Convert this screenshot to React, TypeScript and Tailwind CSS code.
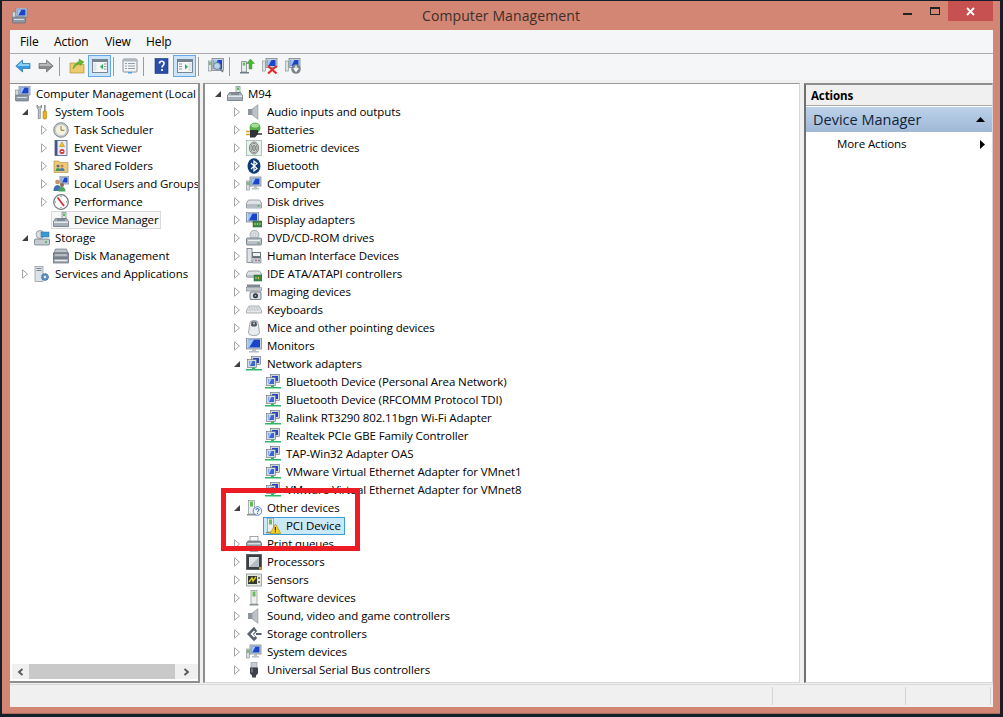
import React from "react";

type P = { children: React.ReactNode; s?: number };
const S = ({ children, s = 16 }: P) => (
  <svg width={s} height={s} viewBox="0 0 16 16" className="shrink-0">{children}</svg>
);

const Mon = ({ x = 3, y = 0, w = 12, h = 9 }: { x?: number; y?: number; w?: number; h?: number }) => (
  <g>
    <rect x={x} y={y} width={w} height={h} fill="#c9d0d8" stroke="#6f7b88" strokeWidth="0.7" />
    <rect x={x + 1.5} y={y + 1.5} width={w - 3} height={h - 3} fill="#1b45c9" />
    <path d={`M${x + 1.5} ${y + 1.5}h${(w - 3) * 0.5}l-${(w - 3) * 0.4} ${h - 3}h-${(w - 3) * 0.1}z`} fill="#9fc4f2" />
  </g>
);

const IComputer = () => (
  <S>
    <rect x="0.5" y="5" width="3" height="9" fill="#d9dde0" stroke="#7e8a90" strokeWidth="0.6" />
    <rect x="1.2" y="6" width="1.5" height="3" fill="#5bb35b" />
    <Mon x={4} y={1} w={11} h={9} />
    <path d="M8 10h3v2h2v1.500H6V12h2z" fill="#b8c0c8" />
  </S>
);
const ICompMgmt = () => (
  <S>
    <Mon x={4} y={0} w={11} h={9} />
    <rect x="0.500" y="9" width="13" height="6" rx="0.800" fill="#8d99a5" stroke="#59636e" strokeWidth="0.600" />
    <rect x="2" y="11" width="10" height="1" fill="#d9dee3" />
    <rect x="0.500" y="4" width="3" height="5" fill="#d5dadd" stroke="#7e8a90" strokeWidth="0.600" />
  </S>
);
const IDevMgr = () => (
  <S>
    <rect x="9" y="0.500" width="4" height="6" fill="#e3e8e3" stroke="#7d8a8d" strokeWidth="0.700" />
    <rect x="10" y="1.500" width="2" height="2.500" fill="#5cb85c" />
    <path d="M2.500 6.500h11l2 3v5H.5v-5z" fill="#a5afb9" stroke="#5d6874" strokeWidth="0.700" />
    <rect x="1" y="9.500" width="14" height="1.500" fill="#e4e8eb" />
    <rect x="4" y="7.500" width="8" height="1" fill="#5d6874" />
  </S>
);
const ITools = () => (
  <S>
    <path d="M3 1v3l1.300 1v9.500h2V5l1.200-1V1L6.500 3h-2z" fill="#c6ccd2" stroke="#5b636b" strokeWidth="0.600" />
    <rect x="10" y="1" width="1.600" height="6" fill="#8a9199" />
    <rect x="9" y="7" width="3.600" height="8" rx="1" fill="#eeb312" stroke="#9a7207" strokeWidth="0.500" />
  </S>
);
const IClock = () => (
  <S>
    <circle cx="8" cy="8" r="7.300" fill="#c3c9cf" stroke="#6c747c" strokeWidth="0.800" />
    <circle cx="8" cy="8" r="5.200" fill="#f6f1dd" />
    <path d="M8 4v4.300h3.500" fill="none" stroke="#8b7c2f" strokeWidth="1" />
  </S>
);
const IEvent = () => (
  <S>
    <rect x="2" y="0.500" width="12" height="15" fill="#e8ecf7" stroke="#3a4a7a" strokeWidth="0.700" />
    <rect x="2" y="0.500" width="2.500" height="15" fill="#44558f" />
    <path d="M9 2l2.500 4.500h-5z" fill="#f5c518" stroke="#8a6d00" strokeWidth="0.400" />
    <circle cx="9" cy="11.500" r="2.500" fill="#d8393a" />
    <rect x="7.800" y="11" width="2.400" height="1" fill="#fff" />
  </S>
);
const IShared = () => (
  <S>
    <path d="M1 3h5l1 1.500h8v10H1z" fill="#eec978" stroke="#a98a3f" strokeWidth="0.600" />
    <circle cx="5" cy="8" r="1.500" fill="#556b8e" />
    <path d="M2.500 13c0-2 1-3 2.500-3s2.500 1 2.500 3z" fill="#3f9c58" />
    <circle cx="9" cy="8" r="1.500" fill="#b98455" />
    <path d="M6.500 13c0-2 1-3 2.500-3s2.500 1 2.500 3z" fill="#4b77b8" />
  </S>
);
const IUsers = () => (
  <S>
    <Mon x={7} y={0} w={9} h={8} />
    <circle cx="4.500" cy="6" r="2.300" fill="#c69364" />
    <path d="M.5 15c0-4 1.500-6 4-6s4 2 4 6z" fill="#3d72b5" />
    <circle cx="9" cy="9" r="2" fill="#8a6c4f" />
    <path d="M5.500 15.500c0-3 1.300-4.500 3.500-4.500s3.500 1.500 3.500 4.500z" fill="#4da35c" />
  </S>
);
const IPerf = () => (
  <S>
    <circle cx="8" cy="8" r="7.300" fill="#fdfdfd" stroke="#6f767d" strokeWidth="1.200" />
    <path d="M4.500 3.500L11 12" stroke="#d8262c" strokeWidth="1.600" />
    <path d="M8 2v1M2 8h1M13 8h1M8 13v1" stroke="#444" strokeWidth="0.800" />
  </S>
);
const IStorage = () => (
  <S>
    <circle cx="6" cy="4.500" r="4" fill="#d8dde2" stroke="#6d7680" strokeWidth="0.600" />
    <rect x="7" y="2" width="8" height="5" fill="#3b9ad6" stroke="#2a6b96" strokeWidth="0.500" />
    <rect x="0.500" y="9" width="15" height="6" rx="1" fill="#c3cad0" stroke="#66707a" strokeWidth="0.700" />
    <rect x="11" y="11" width="2" height="2" fill="#67b567" />
  </S>
);
const IDiskMgmt = () => (
  <S>
    <path d="M2.500 1h11l1.500 4H1z" fill="#bcc3ca" stroke="#5d6570" strokeWidth="0.600" />
    <rect x="0.500" y="5" width="15" height="5" fill="#8a939c" stroke="#4e565f" strokeWidth="0.600" />
    <rect x="2" y="6.500" width="12" height="1" fill="#e3e6e9" />
    <rect x="0.500" y="10.500" width="15" height="4.500" fill="#a6adb4" stroke="#4e565f" strokeWidth="0.600" />
    <rect x="2" y="12" width="12" height="1" fill="#eceef0" />
  </S>
);
const IServices = () => (
  <S>
    <rect x="1" y="0.500" width="8" height="15" fill="#dde2e7" stroke="#7b858f" strokeWidth="0.600" />
    <rect x="2.500" y="2" width="5" height="1" fill="#7b858f" />
    <rect x="2.500" y="4" width="5" height="1" fill="#7b858f" />
    <circle cx="11" cy="11" r="3.500" fill="#5c8fc4" stroke="#3a5d85" strokeWidth="0.800" strokeDasharray="1.500 0.800" />
    <circle cx="11" cy="11" r="1.200" fill="#eaf1f8" />
  </S>
);
const ISpeaker = () => (
  <S>
    <rect x="2" y="5" width="4" height="6" fill="#8f959b" />
    <path d="M6 5l6-4.500v15L6 11z" fill="#bcc1c5" stroke="#8d9399" strokeWidth="0.500" />
  </S>
);
const IBattery = () => (
  <S>
    <circle cx="9" cy="6" r="5.500" fill="#55b04a" />
    <ellipse cx="9" cy="3.500" rx="3.800" ry="2" fill="#a6dd9a" />
    <path d="M4 8h8v4l-3 3.500H4z" fill="#2f3336" />
    <path d="M0 9.500h4M0 12.500h4" stroke="#c9a227" strokeWidth="1.300" />
    <path d="M11 12h5" stroke="#2f3336" strokeWidth="1.500" />
  </S>
);
const IBio = () => (
  <S>
    <rect x="0.500" y="0.500" width="15" height="15" fill="#e9f1ec" stroke="#9db8ab" strokeWidth="0.800" />
    <g fill="none" stroke="#4a4a4a" strokeWidth="0.700">
      <ellipse cx="8" cy="8" rx="4.500" ry="6" />
      <ellipse cx="8" cy="8" rx="3" ry="4.500" />
      <ellipse cx="8" cy="8" rx="1.500" ry="3" />
      <path d="M8 6v4" />
    </g>
  </S>
);
const IBluetooth = () => (
  <S>
    <ellipse cx="8" cy="8" rx="6.500" ry="7.800" fill="#0d3a78" />
    <path d="M5 5l6 5.500L8 13V3l3 2.500L5 11" fill="none" stroke="#fff" strokeWidth="1.200" />
  </S>
);
const IDisk = () => (
  <S>
    <path d="M2.500 6h11l2 3v5H.5V9z" fill="#dfe3e6" stroke="#79838c" strokeWidth="0.700" />
    <rect x="1" y="10" width="14" height="3.500" fill="#b5bcc3" />
    <rect x="11.500" y="11" width="2" height="1.500" fill="#55b055" />
  </S>
);
const IDisplay = () => (
  <S>
    <Mon x={0.500} y={0} w={12} h={10} />
    <rect x="7" y="9" width="9" height="6" fill="#3d8a4e" stroke="#24592f" strokeWidth="0.500" />
    <path d="M8.500 11h1v2h-1zM11 11h1v2h-1zM13.500 11h1v2h-1z" fill="#e5c34a" />
  </S>
);
const IDvd = () => (
  <S>
    <circle cx="8.500" cy="4.800" r="4.500" fill="#d5dbe0" stroke="#7e8790" strokeWidth="0.600" />
    <circle cx="8.500" cy="4.800" r="1.300" fill="#fff" stroke="#7e8790" strokeWidth="0.400" />
    <rect x="0.500" y="8" width="15" height="7" rx="1" fill="#b9c0c7" stroke="#59626b" strokeWidth="0.700" />
    <rect x="2" y="10" width="12" height="1" fill="#eef0f2" />
    <rect x="11.500" y="12.300" width="2" height="1.500" fill="#55b055" />
  </S>
);
const IHid = () => (
  <S>
    <rect x="1" y="0.500" width="5" height="14" fill="#dfe3e8" stroke="#5e6871" strokeWidth="0.700" />
    <path d="M6 4h9v6H6z" fill="#6c7680" />
    <rect x="7" y="5" width="7" height="3" fill="#eef0f2" />
    <path d="M8 10h7v5H6z" fill="#cfd5db" stroke="#5e6871" strokeWidth="0.500" />
    <circle cx="10" cy="12.500" r="1" fill="#c55" />
    <circle cx="13" cy="12.500" r="1" fill="#48a" />
  </S>
);
const IIde = () => (
  <S>
    <path d="M2.500 5h11l2 3v3H.5V8z" fill="#dfe3e6" stroke="#79838c" strokeWidth="0.700" />
    <rect x="1" y="9" width="8" height="3" fill="#b5bcc3" />
    <rect x="8" y="9" width="8" height="6" fill="#3d8a4e" stroke="#24592f" strokeWidth="0.500" />
    <path d="M9.500 11h1v2h-1zM12 11h1v2h-1z" fill="#e5c34a" />
  </S>
);
const IImaging = () => (
  <S>
    <path d="M1 0.500h13v2.500H1z" fill="#808890" />
    <rect x="0.500" y="3.500" width="15" height="3.500" fill="#c2c8ce" stroke="#6a727b" strokeWidth="0.500" />
    <rect x="4" y="8" width="11" height="7.500" rx="1" fill="#dcdfe3" stroke="#4d545b" strokeWidth="0.700" />
    <circle cx="9.500" cy="11.700" r="2.500" fill="#2a3138" />
    <circle cx="9.500" cy="11.700" r="1" fill="#8fb3d6" />
  </S>
);
const IKeyboard = () => (
  <S>
    <path d="M3 4h10l2.500 4.500V11H.5V8.500z" fill="#e6e8ea" stroke="#8b9097" strokeWidth="0.700" />
    <path d="M3 6h10M2.500 8h11" stroke="#9ba1a7" strokeWidth="0.900" strokeDasharray="1 0.700" />
  </S>
);
const IMouse = () => (
  <S>
    <path d="M4 2.500C4 1 6 .5 8 .5s4 .5 4 2l1.500 10c0 2-2.500 3-5.500 3s-5.500-1-5.500-3z" fill="#e9ecee" stroke="#6d747b" strokeWidth="0.600" />
    <path d="M5.500 1.500h5l.5 4-1.500 1h-3.500l-1-1z" fill="#4e565e" />
    <circle cx="8" cy="3.500" r="1" fill="#c5ccd2" />
  </S>
);
const IMonitor = () => (
  <S>
    <Mon x={0.500} y={0} w={15} h={11} />
    <path d="M6 11h4v2h3v1.500H3V13h3z" fill="#b6bdc4" />
  </S>
);
const INet = () => (
  <S>
    <rect x="5.500" y="0.500" width="9" height="8" fill="#cfd5db" stroke="#5f6973" strokeWidth="0.600" />
    <rect x="7" y="2" width="6" height="5" fill="#2647c8" />
    <rect x="1.500" y="3.500" width="9" height="8" fill="#d6dbe0" stroke="#5f6973" strokeWidth="0.600" />
    <rect x="3" y="5" width="6" height="5" fill="#3d63da" />
    <path d="M3.500 5h3L4 10H3z" fill="#a9c9f2" />
    <path d="M6 11.500h3V13h7v1.500H0V13h6z" fill="#2fb765" />
  </S>
);
const Tall = () => (
  <g>
    <rect x="2.500" y="0.500" width="6" height="13.500" fill="#eef0ee" stroke="#8a9298" strokeWidth="0.700" />
    <rect x="4" y="1.500" width="3" height="5" fill="#67bb5e" />
    <rect x="1" y="14" width="9" height="1.500" fill="#8a9298" />
  </g>
);
const IOther = () => (
  <S>
    <Tall />
    <circle cx="11.500" cy="11" r="4.300" fill="#eef3fb" stroke="#3a6bb8" strokeWidth="0.800" />
    <path d="M10 10c0-2 3-2 3 0 0 1-1.500 1-1.500 2.200M11.500 13v.8" fill="none" stroke="#1e4a9a" strokeWidth="1" />
  </S>
);
const IPci = () => (
  <S>
    <Tall />
    <path d="M10.500 6L15.800 15.500H5z" fill="#f8d11d" stroke="#a3830e" strokeWidth="0.600" />
    <path d="M10.400 9v3.500M10.400 13.300v1" stroke="#222" strokeWidth="1.200" />
  </S>
);
const IPrint = () => (
  <S>
    <rect x="4" y="0.500" width="8" height="5" fill="#fbfbfb" stroke="#6b737b" strokeWidth="0.600" />
    <path d="M2 5h12l1.500 2v5H.5V7z" fill="#8f989f" stroke="#4f575e" strokeWidth="0.600" />
    <rect x="1.500" y="7" width="13" height="1.500" fill="#d9dde0" />
    <rect x="4" y="11" width="8" height="4.500" fill="#fbfbfb" stroke="#6b737b" strokeWidth="0.600" />
  </S>
);
const IProc = () => (
  <S>
    <rect x="0.500" y="0.500" width="15" height="15" fill="#3a3f44" stroke="#22262a" strokeWidth="0.500" />
    <rect x="3" y="3" width="10" height="10" fill="#b7bdc2" />
    <path d="M3 3h10L3 13z" fill="#e2e5e7" />
    <rect x="13" y="13" width="2.500" height="2.500" fill="#d9952a" />
  </S>
);
const ISensor = () => (
  <S>
    <rect x="0.500" y="2" width="15" height="12" fill="#e4e9e4" stroke="#7d8a83" strokeWidth="0.700" />
    <rect x="2" y="4" width="9" height="8" fill="#32382f" />
    <path d="M3 10l3-4 1 3 3-4" fill="none" stroke="#e6d42a" strokeWidth="1.300" />
    <rect x="12" y="5" width="2" height="2" fill="#777" />
    <rect x="12" y="9" width="2" height="2" fill="#777" />
  </S>
);
const ISoftware = () => (
  <S>
    <g transform="translate(2.500 0)"><Tall /></g>
  </S>
);
const IStorCtl = () => (
  <S>
    <path d="M8 .8L1 8l7 7.200 3.200-3.200L8 8.500 11.200 5z" fill="#5a636b" />
    <path d="M8 4.500L4.500 8 8 11.500l1.200-1.200L6.800 8 9.200 5.700z" fill="#fff" />
    <path d="M10 8h5.500" stroke="#5a636b" strokeWidth="2" />
  </S>
);
const IUsb = () => (
  <S>
    <rect x="5" y="0.500" width="6" height="5" fill="#c7cdd2" stroke="#7a828a" strokeWidth="0.500" />
    <path d="M4 5.500h8v6l-2 2v2H6v-2l-2-2z" fill="#3c4248" />
    <rect x="5" y="6.500" width="2" height="4" fill="#6d757c" />
  </S>
);

/* toolbar icons */
const ArrowL = () => (
  <S>
    <path d="M7.500 2L.8 8l6.700 6v-3.500H15v-5H7.500z" fill="#3a9ae0" stroke="#2674b4" strokeWidth="0.700" />
    <path d="M2 8l5-4.500v2.500h7.300v2z" fill="#8ed0f7" />
  </S>
);
const ArrowR = () => (
  <S>
    <path d="M8.500 2l6.700 6-6.700 6v-3.500H1v-5h7.500z" fill="#8a8a8a" stroke="#6a6a6a" strokeWidth="0.700" />
    <path d="M14 8L9 3.500V6H1.700v2z" fill="#b9b9b9" />
  </S>
);
const TUp = () => (
  <S>
    <path d="M1 5h5l1 1.500h8V15H1z" fill="#eccb6f" stroke="#b1923f" strokeWidth="0.700" />
    <path d="M4 11C5 6 8 4 10 3.500V1l5 3-4 3.500V5.500c-2 .5-5 2.500-7 5.500z" fill="#6ab82d" stroke="#4b8c1c" strokeWidth="0.400" />
  </S>
);
const TPane = ({ right }: { right?: boolean }) => (
  <S>
    <rect x="0.500" y="1.500" width="15" height="13" fill="#f5f7f9" stroke="#5f6b77" strokeWidth="0.800" />
    <rect x="0.500" y="1.500" width="15" height="2.500" fill="#788390" />
    {right ? (
      <g>
        <path d="M2 6h3M2 8.500h3M2 11h3" stroke="#8b96a2" />
        <path d="M8 6l3 2.800-3 2.800z" fill="#2eb356" />
        <rect x="11.500" y="5" width="3" height="8" fill="#dfe5ea" />
      </g>
    ) : (
      <g>
        <rect x="1.500" y="5" width="3" height="8" fill="#dfe5ea" />
        <path d="M11 6l-3 2.800 3 2.800z" fill="#2eb356" />
        <path d="M12 6h2.500M12 8.500h2.500M12 11h2.500" stroke="#8b96a2" />
      </g>
    )}
  </S>
);
const TProps = () => (
  <S>
    <rect x="1" y="1" width="14" height="13" rx="1" fill="#f2f4f6" stroke="#7d8790" strokeWidth="0.900" />
    <rect x="1" y="1" width="14" height="2.500" fill="#b0b7be" />
    <path d="M3 5.500h2M6 5.500h7M3 8h2M6 8h7M3 10.500h2M6 10.500h7" stroke="#8b96a2" strokeWidth="0.900" />
    <rect x="6" y="14" width="4" height="1.500" fill="#4da3e0" />
  </S>
);
const THelp = () => (
  <S>
    <rect x="1" y="0.500" width="13" height="15" fill="#2a4ea8" stroke="#1d357a" strokeWidth="0.600" />
    <path d="M5.500 5.500c0-3 4.500-3 4.500 0 0 2-2 2-2 4M8 11v2" fill="none" stroke="#fff" strokeWidth="1.700" />
  </S>
);
const TScan = () => (
  <S>
    <rect x="0.500" y="3" width="3" height="10" fill="#dfe3e3" stroke="#7e8a90" strokeWidth="0.600" />
    <rect x="1.200" y="4" width="1.500" height="3" fill="#5bb35b" />
    <Mon x={4} y={0.500} w={11.500} h={12} />
    <circle cx="9" cy="8" r="3.500" fill="#b8d3ea" stroke="#6b7f90" strokeWidth="1" />
    <path d="M11.500 10.500l3.500 3.500" stroke="#6b7f90" strokeWidth="1.600" />
  </S>
);
const TUpdate = () => (
  <S>
    <path d="M1 14h9v1.500H1z" fill="#70808a" />
    <path d="M2.500 3.500h5v10.500h-5z" fill="#eceeee" stroke="#6c757d" strokeWidth="0.700" />
    <rect x="3.800" y="4.500" width="2.500" height="3" fill="#67bb5e" />
    <path d="M11.500 1l4 4.500H13V11h-3V5.500H7.500z" fill="#4cb43a" stroke="#2f8420" strokeWidth="0.400" />
  </S>
);
const TRemove = () => (
  <S>
    <rect x="0.500" y="3" width="3" height="10" fill="#dfe3e3" stroke="#7e8a90" strokeWidth="0.600" />
    <Mon x={4} y={0.500} w={11} h={9} />
    <path d="M6 8l8.500 7.500M14.500 8L6 15.500" stroke="#dc2a2a" strokeWidth="2.100" />
  </S>
);
const TEnable = () => (
  <S>
    <rect x="0.500" y="3" width="3" height="10" fill="#dfe3e3" stroke="#7e8a90" strokeWidth="0.600" />
    <Mon x={4} y={0.500} w={11} h={9} />
    <circle cx="11" cy="11" r="4.800" fill="#7b848c" />
    <path d="M11 7.500v4M8.800 10l2.200 3 2.200-3" fill="none" stroke="#fff" strokeWidth="1.400" />
  </S>
);

const Collapsed = () => (
  <svg width="8" height="10" viewBox="0 0 8 10" className="shrink-0">
    <path d="M1.500 .8L6.500 5l-5 4.200z" fill="#fff" stroke="#a6a6a6" />
  </svg>
);
const Expanded = () => (
  <svg width="8" height="8" viewBox="0 0 8 8" className="shrink-0">
    <path d="M7 1v6H1z" fill="#404040" />
  </svg>
);

type RowData = {
  d: 0 | 1 | 2;
  t: string;
  I: () => React.ReactElement;
  e?: "c" | "o";
  sel?: "blue" | "gray";
};

const indent: Record<number, string> = { 0: "", 1: "pl-[19px]", 2: "pl-[38px]" };

function Row({ d, t, I, e, sel, noExp }: RowData & { noExp?: boolean }) {
  const box =
    sel === "blue"
      ? "border-[#3a9fd8] bg-[#cbe8f6] pr-[3px]"
      : sel === "gray"
        ? "border-[#d9d9d9] bg-[#f7f7f7] pr-px"
        : "border-transparent pr-px";
  return (
    <div className={`flex h-[18px] items-center whitespace-nowrap ${indent[d]}`}>
      {!noExp && (
        <span className="flex h-[18px] w-[19px] shrink-0 items-center justify-center">
          {e === "c" ? <Collapsed /> : e === "o" ? <Expanded /> : null}
        </span>
      )}
      <span className={`-ml-[2px] flex h-[18px] items-center border pl-px ${box}`}>
        <I />
        <span className="pl-[5px]">{t}</span>
      </span>
    </div>
  );
}

const leftRows: RowData[] = [
  { d: 1, t: "System Tools", I: ITools, e: "o" },
  { d: 2, t: "Task Scheduler", I: IClock, e: "c" },
  { d: 2, t: "Event Viewer", I: IEvent, e: "c" },
  { d: 2, t: "Shared Folders", I: IShared, e: "c" },
  { d: 2, t: "Local Users and Groups", I: IUsers, e: "c" },
  { d: 2, t: "Performance", I: IPerf, e: "c" },
  { d: 2, t: "Device Manager", I: IDevMgr, sel: "gray" },
  { d: 1, t: "Storage", I: IStorage, e: "o" },
  { d: 2, t: "Disk Management", I: IDiskMgmt },
  { d: 1, t: "Services and Applications", I: IServices, e: "c" },
];

const midRows: RowData[] = [
  { d: 0, t: "M94", I: IDevMgr, e: "o" },
  { d: 1, t: "Audio inputs and outputs", I: ISpeaker, e: "c" },
  { d: 1, t: "Batteries", I: IBattery, e: "c" },
  { d: 1, t: "Biometric devices", I: IBio, e: "c" },
  { d: 1, t: "Bluetooth", I: IBluetooth, e: "c" },
  { d: 1, t: "Computer", I: IComputer, e: "c" },
  { d: 1, t: "Disk drives", I: IDisk, e: "c" },
  { d: 1, t: "Display adapters", I: IDisplay, e: "c" },
  { d: 1, t: "DVD/CD-ROM drives", I: IDvd, e: "c" },
  { d: 1, t: "Human Interface Devices", I: IHid, e: "c" },
  { d: 1, t: "IDE ATA/ATAPI controllers", I: IIde, e: "c" },
  { d: 1, t: "Imaging devices", I: IImaging, e: "c" },
  { d: 1, t: "Keyboards", I: IKeyboard, e: "c" },
  { d: 1, t: "Mice and other pointing devices", I: IMouse, e: "c" },
  { d: 1, t: "Monitors", I: IMonitor, e: "c" },
  { d: 1, t: "Network adapters", I: INet, e: "o" },
  { d: 2, t: "Bluetooth Device (Personal Area Network)", I: INet },
  { d: 2, t: "Bluetooth Device (RFCOMM Protocol TDI)", I: INet },
  { d: 2, t: "Ralink RT3290 802.11bgn Wi-Fi Adapter", I: INet },
  { d: 2, t: "Realtek PCIe GBE Family Controller", I: INet },
  { d: 2, t: "TAP-Win32 Adapter OAS", I: INet },
  { d: 2, t: "VMware Virtual Ethernet Adapter for VMnet1", I: INet },
  { d: 2, t: "VMware Virtual Ethernet Adapter for VMnet8", I: INet },
  { d: 1, t: "Other devices", I: IOther, e: "o" },
  { d: 2, t: "PCI Device", I: IPci, sel: "blue" },
  { d: 1, t: "Print queues", I: IPrint, e: "c" },
  { d: 1, t: "Processors", I: IProc, e: "c" },
  { d: 1, t: "Sensors", I: ISensor, e: "c" },
  { d: 1, t: "Software devices", I: ISoftware, e: "c" },
  { d: 1, t: "Sound, video and game controllers", I: ISpeaker, e: "c" },
  { d: 1, t: "Storage controllers", I: IStorCtl, e: "c" },
  { d: 1, t: "System devices", I: IComputer, e: "c" },
  { d: 1, t: "Universal Serial Bus controllers", I: IUsb, e: "c" },
];

const Sep = ({ mr }: { mr: string }) => (
  <span className={`ml-[2px] h-[19px] w-px shrink-0 bg-[#9a9a9a] ${mr}`} />
);
const Tb = ({ on, children }: { on?: boolean; children: React.ReactNode }) => (
  <span
    className={`flex h-[22px] w-[23px] shrink-0 items-center justify-center border ${
      on ? "border-[#66a7e8] bg-[#cbe4fa]" : "border-transparent"
    }`}
  >
    {children}
  </span>
);

export default function App() {
  return (
    <div
      className="relative h-[717px] w-[1003px] overflow-hidden bg-[#15202a] pb-[3px] pl-[2px] pr-[3px] pt-px text-[11.5px] leading-[16px] tracking-[-0.1px] text-black"
      style={{ fontFamily: '"Open Sans", "Noto Sans", sans-serif' }}
    >
      <div className="flex h-full flex-col border-b border-[#a8695a] bg-[#d48674] pb-[6px] pl-[8px] pr-[7px]">
        {/* title bar */}
        <div className="flex h-[29px] shrink-0 items-start">
          <span className="ml-[2px] mt-[7px] flex w-[16px] shrink-0 items-center">
            <ICompMgmt />
          </span>
          <span className="flex-1 pl-[80px] pt-[5px] text-center text-[14px] leading-[20px] tracking-[0.1px] text-[#3a2f2b]">
            Computer Management
          </span>
          <div className="flex items-start">
            <span className="flex h-[19px] w-[27px] items-center justify-center">
              <span className="mt-[6px] h-[2px] w-[9px] bg-[#222]" />
            </span>
            <span className="flex h-[19px] w-[27px] items-center justify-center">
              <span className="h-[8px] w-[10px] border border-t-2 border-[#222]" />
            </span>
            <span className="flex h-[20px] w-[45px] items-center justify-center bg-[#c75050] text-white">
              <svg width="9" height="9" viewBox="0 0 9 9">
                <path d="M1 1l7 7M8 1L1 8" stroke="#fff" strokeWidth="1.800" />
              </svg>
            </span>
          </div>
        </div>

        {/* client */}
        <div className="flex min-h-0 flex-1 flex-col bg-[#f0f0f0]">
          <div className="flex h-[24px] shrink-0 items-center border-b border-[#acacac] bg-[#f5f6f7] pl-[10px] text-[12px]">
            <span className="w-[34px]">File</span>
            <span className="w-[51px]">Action</span>
            <span className="w-[41px]">View</span>
            <span>Help</span>
          </div>
          <div className="flex h-[26px] shrink-0 items-center bg-[#f5f6f7] pb-[2px] pl-px">
            <Tb><ArrowL /></Tb>
            <Tb><ArrowR /></Tb>
            <Sep mr="mr-[5px]" />
            <Tb><TUp /></Tb>
            <Tb on><TPane /></Tb>
            <Sep mr="mr-[4px]" />
            <Tb><TProps /></Tb>
            <Sep mr="mr-[6px]" />
            <Tb><THelp /></Tb>
            <Tb on><TPane right /></Tb>
            <Sep mr="mr-[5px]" />
            <Tb><TScan /></Tb>
            <Sep mr="mr-[5px]" />
            <Tb><TUpdate /></Tb>
            <Tb><TRemove /></Tb>
            <Tb><TEnable /></Tb>
          </div>

          <div className="flex min-h-0 flex-1 pt-[3px]">
            {/* left */}
            <div className="flex w-[190px] shrink-0 flex-col overflow-hidden border-b-2 border-r-2 border-t border-[#8e8e8e] border-l-white bg-white pl-[5px] pt-px">
              <div className="min-h-0 flex-1 overflow-hidden">
                <Row d={0} t="Computer Management (Local" I={ICompMgmt} noExp />
                {leftRows.map((r) => (
                  <Row key={r.t} {...r} d={(r.d - 1) as 0 | 1} />
                ))}
              </div>
              <div className="-ml-[3px] mb-[2px] flex h-[15px] shrink-0 items-center bg-[#f0f0f0]">
                <span className="flex w-[17px] justify-center">
                  <svg width="7" height="8" viewBox="0 0 7 8"><path d="M5.500 1L2 4l3.500 3" fill="none" stroke="#555" strokeWidth="1.800" /></svg>
                </span>
                <span className="h-full w-[146px] bg-[#c9c9c9]" />
                <span className="flex w-[22px] justify-center">
                  <svg width="7" height="8" viewBox="0 0 7 8"><path d="M1.500 1L5 4 1.500 7" fill="none" stroke="#555" strokeWidth="1.800" /></svg>
                </span>
              </div>
            </div>

            {/* center */}
            <div className="ml-[3px] flex w-[597px] shrink-0 flex-col overflow-hidden border-b border-l-2 border-r border-t border-[#d6d6d6] border-l-[#8e8e8e] border-t-[#9a9a9a] bg-white pl-[3px] pt-px">
              {midRows.map((r) => (
                <Row key={r.t} {...r} />
              ))}
            </div>

            {/* right */}
            <div className="ml-[4px] flex min-w-0 flex-1 flex-col border-b border-l-2 border-r border-t-2 border-[#d6d6d6] border-l-[#707070] border-t-[#8e8e8e] bg-white">
              <div className="flex h-[21px] shrink-0 items-center border-b border-[#a8a8a8] bg-[#f0f0f0] pl-[5px] pt-px font-bold">
                Actions
              </div>
              <div className="mt-px flex h-[25px] shrink-0 items-center justify-between bg-gradient-to-b from-[#bcd2ea] to-[#9fb8d6] pl-[7px] pr-[7px] text-[14.5px] leading-[20px] tracking-normal text-[#10243c]">
                <span>Device Manager</span>
                <svg width="9" height="5" viewBox="0 0 9 5"><path d="M4.500 0L9 5H0z" fill="#000" /></svg>
              </div>
              <div className="flex h-[24px] items-center justify-between pl-[31px] pr-[7px]">
                <span>More Actions</span>
                <svg width="5" height="9" viewBox="0 0 5 9"><path d="M0 0l5 4.500L0 9z" fill="#000" /></svg>
              </div>
            </div>
          </div>

          {/* status */}
          <div className="mt-px flex h-[23px] shrink-0 items-stretch border-t border-[#d8d8d8] bg-[#f0f0f0] py-[2px] pr-[2px]">
            <span className="flex-1 border-r border-[#d4d4d4]" />
            <span className="w-[133px] border-r border-[#d4d4d4]" />
            <span className="w-[85px] border-r border-[#d4d4d4]" />
          </div>
        </div>
      </div>

      {/* callout drawn over the screenshot */}
      <div className="pointer-events-none absolute left-[221px] top-[488px] h-[63px] w-[139px] border-[5px] border-[#ed1c24]" />
    </div>
  );
}
